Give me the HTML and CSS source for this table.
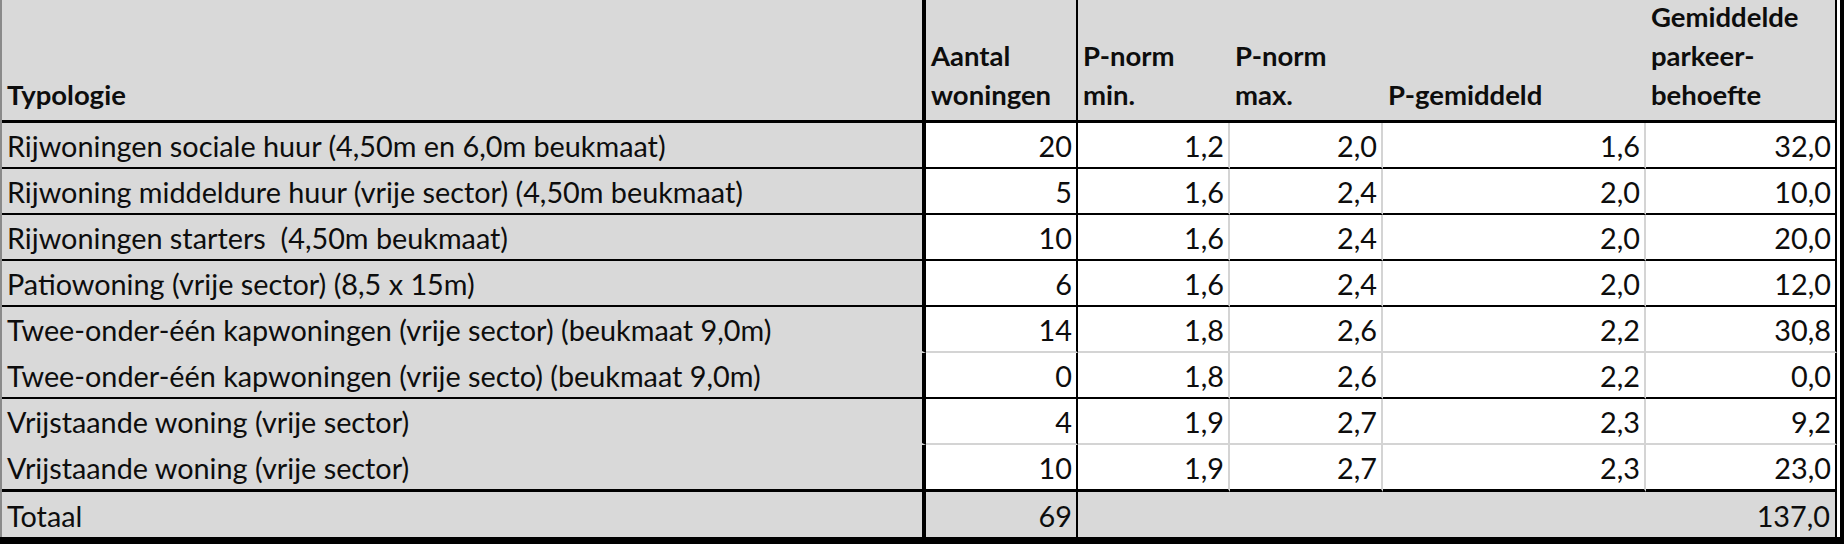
FILE: index.html
```html
<!DOCTYPE html>
<html lang="nl">
<head>
<meta charset="utf-8">
<title>Parkeerbehoefte</title>
<link rel="stylesheet" href="styles.css">
</head>
<body>
<div class="frame">
  <div class="top">
    <div class="sheet">
      <div class="c hd first"><span>Typologie</span></div>
      <div class="c hd dark-r"><span>Aantal<br>woningen</span></div>
      <div class="c hd"><span>P-norm<br>min.</span></div>
      <div class="c hd"><span>P-norm<br>max.</span></div>
      <div class="c hd"><span>P-gemiddeld</span></div>
      <div class="c hd dark-r"><span>Gemiddelde<br>parkeer-<br>behoefte</span></div>

      <div class="c ty">Rijwoningen sociale huur (4,50m en 6,0m beukmaat)</div>
      <div class="c n dark-r">20</div><div class="c n">1,2</div><div class="c n">2,0</div><div class="c n">1,6</div><div class="c n dark-r">32,0</div>

      <div class="c ty">Rijwoning middeldure huur (vrije sector) (4,50m beukmaat)</div>
      <div class="c n dark-r">5</div><div class="c n">1,6</div><div class="c n">2,4</div><div class="c n">2,0</div><div class="c n dark-r">10,0</div>

      <div class="c ty">Rijwoningen starters&nbsp; (4,50m beukmaat)</div>
      <div class="c n dark-r">10</div><div class="c n">1,6</div><div class="c n">2,4</div><div class="c n">2,0</div><div class="c n dark-r">20,0</div>

      <div class="c ty">Patiowoning (vrije sector) (8,5 x 15m)</div>
      <div class="c n dark-r">6</div><div class="c n">1,6</div><div class="c n">2,4</div><div class="c n">2,0</div><div class="c n dark-r">12,0</div>

      <div class="c ty light-b">Twee-onder-één kapwoningen (vrije sector) (beukmaat 9,0m)</div>
      <div class="c n dark-r light-b">14</div><div class="c n light-b">1,8</div><div class="c n light-b">2,6</div><div class="c n light-b">2,2</div><div class="c n dark-r light-b">30,8</div>

      <div class="c ty">Twee-onder-één kapwoningen (vrije secto) (beukmaat 9,0m)</div>
      <div class="c n dark-r">0</div><div class="c n">1,8</div><div class="c n">2,6</div><div class="c n">2,2</div><div class="c n dark-r">0,0</div>

      <div class="c ty light-b">Vrijstaande woning (vrije sector)</div>
      <div class="c n dark-r light-b">4</div><div class="c n light-b">1,9</div><div class="c n light-b">2,7</div><div class="c n light-b">2,3</div><div class="c n dark-r light-b">9,2</div>

      <div class="c ty last">Vrijstaande woning (vrije sector)</div>
      <div class="c n dark-r last">10</div><div class="c n last">1,9</div><div class="c n last">2,7</div><div class="c n last">2,3</div><div class="c n dark-r last">23,0</div>

      <div class="c tot first">Totaal</div>
      <div class="c tot num dark-r">69</div>
      <div class="c tot num dark-r span">137,0</div>
    </div>
    <div class="gap"></div>
    <div class="bar-r"></div>
  </div>
  <div class="bar-b"></div>
</div>
</body>
</html>
```
FILE: styles.css
```css
html, body {
  margin: 0;
  padding: 0;
  background: #ffffff;
}

.frame {
  display: flex;
  flex-direction: column;
  width: 1844px;
  height: 544px;
}

.top {
  display: flex;
  height: 537px;
}

.sheet {
  display: grid;
  grid-template-columns: 924px 152px 152px 153px 263px 191px;
  grid-template-rows: 123px repeat(7, 46px) 47px 45px;
  border-left: 2px solid #8a8a8a;
  font-family: Lato, "Liberation Sans", sans-serif;
  font-size: 28.8px;
  color: #0d0d0d;
}

.gap {
  width: 3px;
  background: #ffffff;
}

.bar-r {
  width: 4px;
  background: #000000;
}

.bar-b {
  height: 7px;
  background: #000000;
}

.c {
  box-sizing: border-box;
  display: flex;
  align-items: flex-end;
  line-height: 30px;
  white-space: nowrap;
  overflow: hidden;
  padding-bottom: 6px;
}

/* header */
.hd {
  background: #d9d9d9;
  font-weight: 700;
  font-size: 27.5px;
  line-height: 39px;
  padding-left: 5px;
  padding-bottom: 6px;
  border-bottom: 3px solid #000000;
}

.hd.first {
  border-right: 4px solid #000000;
}

/* typology column */
.ty {
  background: #d9d9d9;
  padding-left: 5px;
  border-right: 4px solid #000000;
  border-bottom: 2px solid #000000;
}

/* numeric cells */
.n {
  background: #ffffff;
  justify-content: flex-end;
  padding-right: 4px;
  border-right: 2px solid #d4d4d4;
  border-bottom: 2px solid #000000;
}

.dark-r {
  border-right: 2px solid #000000;
}

.ty.light-b {
  border-bottom-color: #d9d9d9;
}

.n.light-b {
  border-bottom-color: #d4d4d4;
}

.last {
  border-bottom: 3px solid #000000;
}

/* total row */
.tot {
  background: #d9d9d9;
  padding-left: 5px;
}

.tot.first {
  border-right: 4px solid #000000;
}

.tot.num {
  justify-content: flex-end;
  padding-right: 4px;
}

.tot.span {
  grid-column: 3 / span 4;
  padding-right: 5px;
}
```
